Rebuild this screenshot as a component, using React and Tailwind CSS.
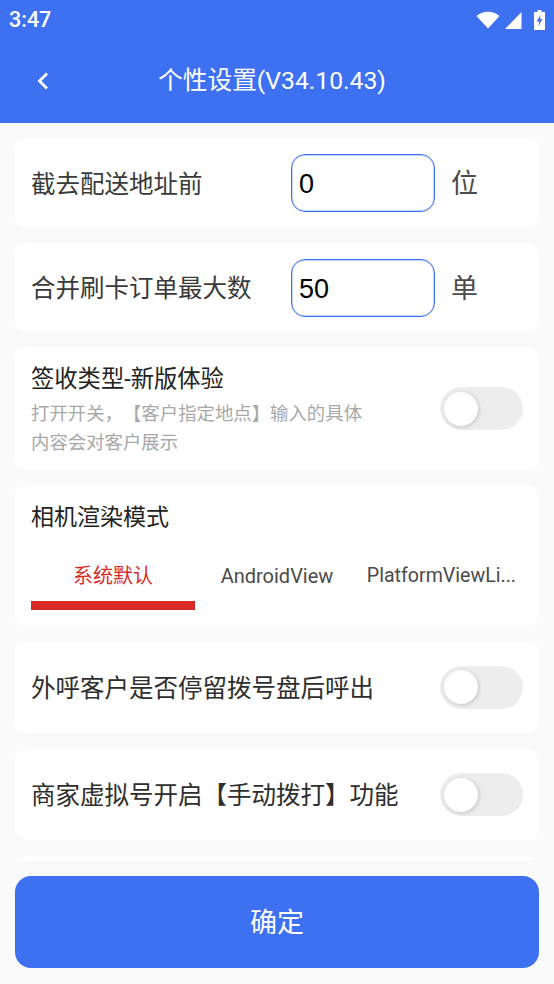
import React from 'react';

const FONT = '"Roboto", "Noto Sans CJK SC", sans-serif';

const Toggle = () => (
  <div className="w-[83px] h-[43px] rounded-full bg-[#ededed] flex items-center pl-[4px] shrink-0">
    <div className="w-[34px] h-[34px] rounded-full bg-white shadow-[1px_1px_4px_rgba(0,0,0,0.18)]" />
  </div>
);

const InputRow = ({ label, value, unit, height }) => (
  <div className={`bg-white rounded-[12px] flex items-center pl-[16px] ${height}`}>
    <div className="w-[260px] pt-[3px] text-[24.5px] leading-[32px] text-[#3a3a3a]">{label}</div>
    <div className="w-[144px] h-[58px] rounded-[14px] border border-[#3e71f1] shadow-[inset_0_0_0_1px_rgba(62,113,241,0.3)] flex items-center px-[7px] pt-[3px] text-[27px] text-black font-['Liberation_Sans',sans-serif]">
      {value}
    </div>
    <div className="ml-[16px] pt-[3px] text-[27px] text-[#4a4a4a]">{unit}</div>
  </div>
);

const SwitchRow = ({ label, height }) => (
  <div className={`bg-white rounded-[12px] flex items-center justify-between pl-[16px] pr-[16px] ${height}`}>
    <div className="pt-[3px] text-[24.5px] leading-[32px] text-[#2e2e2e]">{label}</div>
    <Toggle />
  </div>
);

export default function App() {
  return (
    <div
      className="h-[984px] w-[554px] flex flex-col bg-[#fafafa] overflow-hidden [text-spacing-trim:space-all]"
      style={{ fontFamily: FONT }}
    >
      <div className="h-[123px] bg-[#3e71f1] shrink-0 flex flex-col text-white">
        <div className="h-[39px] flex items-center justify-between pl-[9px] pr-[9px]">
          <span className="text-[21.5px] font-medium pt-[1px]">3:47</span>
          <div className="flex items-center gap-[5px]">
            <svg width="24" height="18" viewBox="0 0 24 18">
              <path d="M0.5 5 C7 -0.8 17 -0.8 23.5 5 L12 17.5 Z" fill="#fff" />
            </svg>
            <svg width="17" height="18" viewBox="0 0 17 18" className="mr-[7px]">
              <path d="M16.500 1 V18 H0 Z" fill="#fff" />
            </svg>
            <svg width="11" height="20" viewBox="0 0 11 20">
              <path d="M3.500 0 H7.500 V2 H11 V20 H0 V2 H3.500 Z" fill="#fff" />
              <path d="M6.500 4.500 L2.800 11.500 H5.200 L4.500 16.500 L8.300 9 H5.900 Z" fill="#3e71f1" />
            </svg>
          </div>
        </div>
        <div className="relative flex-1 flex items-center justify-center pr-[10px]">
          <svg width="14" height="20" viewBox="0 0 14 20" className="absolute left-[36px] top-[32px]">
            <path d="M11 2.500 L3.500 10 L11 17.500" fill="none" stroke="#fff" strokeWidth="2.800" />
          </svg>
          <span className="text-[24.7px] leading-[32px]">个性设置(V34.10.43)</span>
        </div>
      </div>

      <div className="flex-1 min-h-0 overflow-hidden px-[15px] pt-[15px] flex flex-col gap-[15px]">
        <InputRow label="截去配送地址前" value="0" unit="位" height="h-[90px] shrink-0" />
        <InputRow label="合并刷卡订单最大数" value="50" unit="单" height="h-[89px] shrink-0" />

        <div className="bg-white rounded-[12px] h-[123px] shrink-0 flex items-center justify-between pl-[16px] pr-[16px]">
          <div className="pt-[3px]">
            <div className="text-[23.3px] leading-[30px] text-[#222222] mb-[5px]">签收类型-新版体验</div>
            <div className="w-[340px] text-[18.4px] leading-[29px] text-[#a8a8a8]">
              打开开关，【客户指定地点】输入的具体内容会对客户展示
            </div>
          </div>
          <Toggle />
        </div>

        <div className="bg-white rounded-[12px] h-[141px] shrink-0 pl-[16px] pr-[16px] pt-[18px]">
          <div className="text-[23px] leading-[30px] text-[#222222]">相机渲染模式</div>
          <div className="flex mt-[28px]">
            <div className="w-[164px] flex flex-col items-center">
              <span className="text-[20px] leading-[30px] text-[#d92b26]">系统默认</span>
              <div className="w-full h-[9px] bg-[#d92b26] mt-[10px]" />
            </div>
            <div className="w-[164px] text-center text-[20px] leading-[30px] text-[#4a4a4a]">AndroidView</div>
            <div className="flex-1 min-w-0 text-right text-[19.6px] leading-[30px] text-[#4a4a4a] whitespace-nowrap pr-[7px]">
              PlatformViewLi...
            </div>
          </div>
        </div>

        <SwitchRow label="外呼客户是否停留拨号盘后呼出" height="h-[92px] shrink-0" />
        <SwitchRow label="商家虚拟号开启【手动拨打】功能" height="h-[91px] shrink-0 mt-[1px] mb-[1px]" />
        <div className="bg-white rounded-[12px] h-[90px] shrink-0" />
      </div>

      <div className="h-[123px] shrink-0 px-[15px] pt-[15px]">
        <button className="w-full h-[92px] rounded-[16px] bg-[#3e71f1] text-white text-[27px] pt-[3px]">确定</button>
      </div>
    </div>
  );
}
